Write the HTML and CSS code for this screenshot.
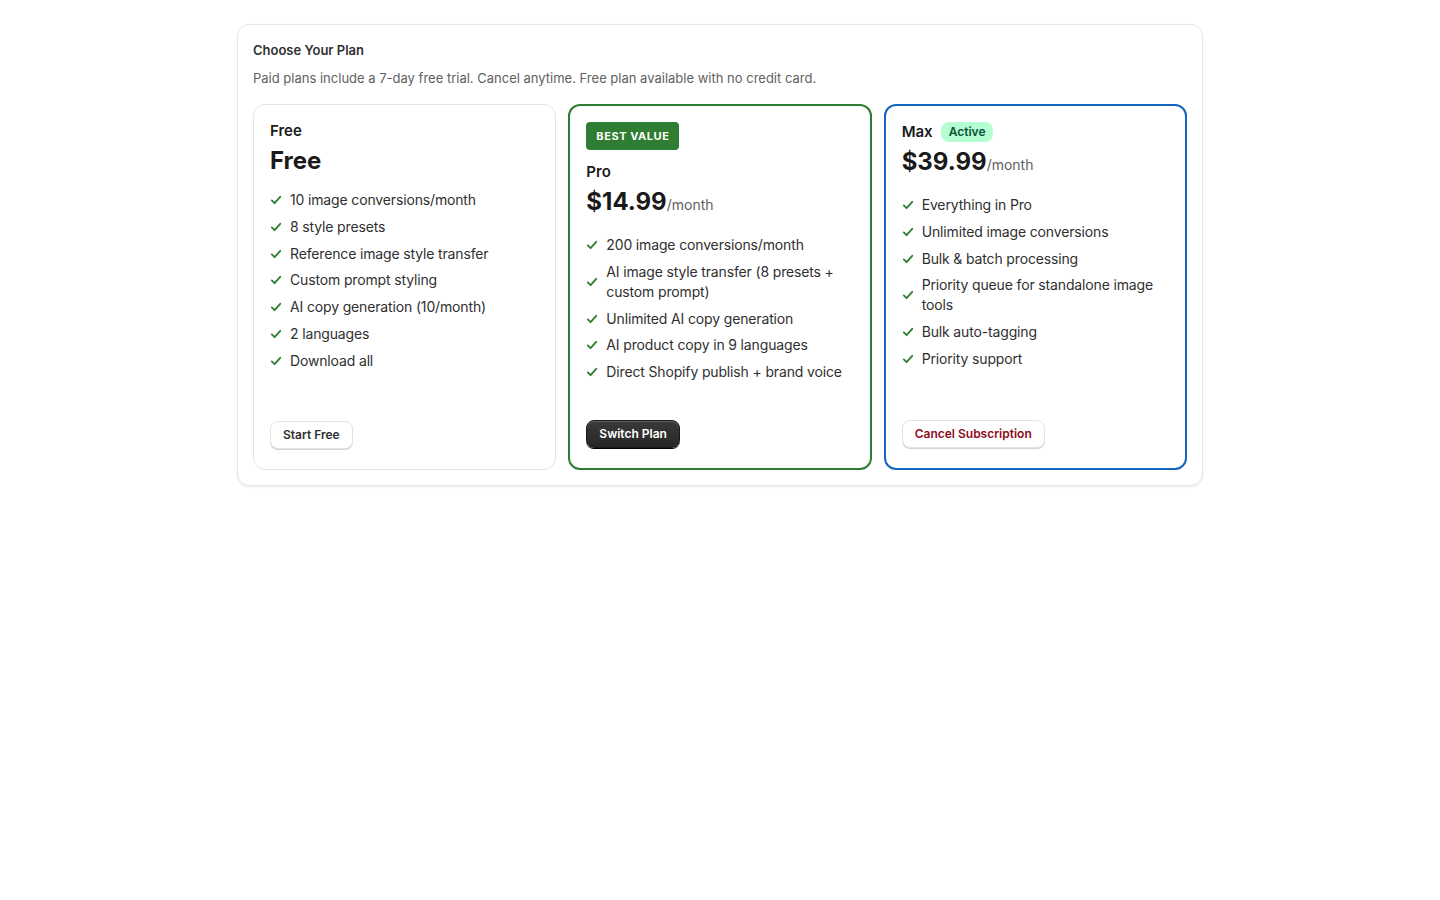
FILE: index.html
```html
<!DOCTYPE html>
<html lang="en">
<head>
<meta charset="utf-8">
<title>Choose Your Plan</title>
<link rel="stylesheet" href="styles.css">
</head>
<body>
<div class="page">
  <section class="panel">
    <h2 class="panel-title">Choose Your Plan</h2>
    <p class="panel-sub">Paid plans include a 7-day free trial. Cancel anytime. Free plan available with no credit card.</p>
    <div class="plans">
      <div class="plan plan-free">
        <div class="plan-name">Free</div>
        <div class="price">Free</div>
        <ul class="features">
          <li><svg class="check" viewBox="0 0 12 12"><path d="M1.8 6.4 4.6 9.2 10.2 2.8"/></svg><span>10 image conversions/month</span></li>
          <li><svg class="check" viewBox="0 0 12 12"><path d="M1.8 6.4 4.6 9.2 10.2 2.8"/></svg><span>8 style presets</span></li>
          <li><svg class="check" viewBox="0 0 12 12"><path d="M1.8 6.4 4.6 9.2 10.2 2.8"/></svg><span>Reference image style transfer</span></li>
          <li><svg class="check" viewBox="0 0 12 12"><path d="M1.8 6.4 4.6 9.2 10.2 2.8"/></svg><span>Custom prompt styling</span></li>
          <li><svg class="check" viewBox="0 0 12 12"><path d="M1.8 6.4 4.6 9.2 10.2 2.8"/></svg><span>AI copy generation (10/month)</span></li>
          <li><svg class="check" viewBox="0 0 12 12"><path d="M1.8 6.4 4.6 9.2 10.2 2.8"/></svg><span>2 languages</span></li>
          <li><svg class="check" viewBox="0 0 12 12"><path d="M1.8 6.4 4.6 9.2 10.2 2.8"/></svg><span>Download all</span></li>
        </ul>
        <div class="actions"><button class="btn btn-secondary">Start Free</button></div>
      </div>
      <div class="plan plan-pro">
        <div class="tag-best">BEST VALUE</div>
        <div class="plan-name">Pro</div>
        <div class="price">$14.99<span class="per">/month</span></div>
        <ul class="features">
          <li><svg class="check" viewBox="0 0 12 12"><path d="M1.8 6.4 4.6 9.2 10.2 2.8"/></svg><span>200 image conversions/month</span></li>
          <li><svg class="check" viewBox="0 0 12 12"><path d="M1.8 6.4 4.6 9.2 10.2 2.8"/></svg><span>AI image style transfer (8 presets + custom prompt)</span></li>
          <li><svg class="check" viewBox="0 0 12 12"><path d="M1.8 6.4 4.6 9.2 10.2 2.8"/></svg><span>Unlimited AI copy generation</span></li>
          <li><svg class="check" viewBox="0 0 12 12"><path d="M1.8 6.4 4.6 9.2 10.2 2.8"/></svg><span>AI product copy in 9 languages</span></li>
          <li><svg class="check" viewBox="0 0 12 12"><path d="M1.8 6.4 4.6 9.2 10.2 2.8"/></svg><span>Direct Shopify publish + brand voice</span></li>
        </ul>
        <div class="actions"><button class="btn btn-primary">Switch Plan</button></div>
      </div>
      <div class="plan plan-max">
        <div class="name-row"><span class="plan-name">Max</span><span class="badge-active">Active</span></div>
        <div class="price">$39.99<span class="per">/month</span></div>
        <ul class="features">
          <li><svg class="check" viewBox="0 0 12 12"><path d="M1.8 6.4 4.6 9.2 10.2 2.8"/></svg><span>Everything in Pro</span></li>
          <li><svg class="check" viewBox="0 0 12 12"><path d="M1.8 6.4 4.6 9.2 10.2 2.8"/></svg><span>Unlimited image conversions</span></li>
          <li><svg class="check" viewBox="0 0 12 12"><path d="M1.8 6.4 4.6 9.2 10.2 2.8"/></svg><span>Bulk &amp; batch processing</span></li>
          <li><svg class="check" viewBox="0 0 12 12"><path d="M1.8 6.4 4.6 9.2 10.2 2.8"/></svg><span>Priority queue for standalone image tools</span></li>
          <li><svg class="check" viewBox="0 0 12 12"><path d="M1.8 6.4 4.6 9.2 10.2 2.8"/></svg><span>Bulk auto-tagging</span></li>
          <li><svg class="check" viewBox="0 0 12 12"><path d="M1.8 6.4 4.6 9.2 10.2 2.8"/></svg><span>Priority support</span></li>
        </ul>
        <div class="actions"><button class="btn btn-secondary btn-critical">Cancel Subscription</button></div>
      </div>
    </div>
  </section>
</div>
</body>
</html>
```
FILE: styles.css
```css
* { box-sizing: border-box; }
html, body { margin: 0; padding: 0; background: #ffffff; }
body {
  font-family: Inter, "Noto Sans", "Liberation Sans", sans-serif;
  color: #303030;
  -webkit-font-smoothing: antialiased;
}
.page { padding: 24px 16px; }
.panel {
  max-width: 966px;
  margin: 0 auto;
  background: #fff;
  border: 1px solid #e6e6e6;
  border-radius: 12px;
  box-shadow: 0 1px 2px rgba(0,0,0,0.08);
  padding: 15px 15px 15px;
}
.panel-title {
  margin: 0;
  font-size: 13px;
  line-height: 20px;
  font-weight: 600;
  color: #303030;
}
.panel-sub {
  margin: 8px 0 0;
  font-size: 13px;
  line-height: 20px;
  color: #616161;
}
.plans {
  margin-top: 16px;
  display: grid;
  grid-template-columns: repeat(3, 1fr);
  gap: 12px;
}
.plan {
  display: flex;
  flex-direction: column;
  border: 1px solid #e3e3e3;
  border-radius: 12px;
  padding: 16px 16px 20px;
  min-height: 366px;
}
.plan-pro { border: 2px solid #2e7d32; padding: 16px 16px 20px; }
.plan-max { border: 2px solid #1565c0; padding: 16px 16px 20px; }
.plan-name {
  font-size: 15px;
  line-height: 20px;
  font-weight: 600;
  color: #1a1a1a;
}
.name-row { display: flex; align-items: center; gap: 8px; }
.badge-active {
  background: #b4fed2;
  color: #0c5132;
  font-size: 12px;
  font-weight: 600;
  line-height: 20px;
  padding: 0 8px;
  border-radius: 8px;
}
.tag-best {
  align-self: flex-start;
  background: #2e7d32;
  color: #fff;
  font-size: 11px;
  font-weight: 700;
  letter-spacing: 0.55px;
  line-height: 28px;
  padding: 0 10px;
  border-radius: 4px;
  margin: 0 0 12px;
}
.price {
  display: flex;
  align-items: baseline;
  margin-top: 4px;
  font-size: 24px;
  line-height: 32px;
  font-weight: 700;
  color: #1a1a1a;
}
.per {
  font-size: 14px;
  line-height: 20px;
  font-weight: 400;
  color: #616161;
}
.features {
  list-style: none;
  margin: 17px 0 0;
  padding: 0;
  display: flex;
  flex-direction: column;
  gap: 6.8px;
}
.plan-free .features { margin-top: 13px; }
.features li {
  display: flex;
  align-items: center;
  gap: 8px;
  font-size: 14px;
  letter-spacing: -0.15px;
  line-height: 20px;
  font-weight: 400;
  color: #303030;
}
.check {
  flex: none;
  width: 12px;
  height: 12px;
  fill: none;
  stroke: #2e7d32;
  stroke-width: 1.8;
  stroke-linecap: round;
  stroke-linejoin: round;
}
.actions { margin-top: auto; padding-top: 24px; }
.btn {
  font-family: inherit;
  font-size: 12px;
  font-weight: 600;
  line-height: 20px;
  height: 28px;
  padding: 0 12px;
  border-radius: 8px;
  cursor: pointer;
}
.btn-secondary {
  background: #fff;
  color: #303030;
  border: 1px solid #e3e3e3;
  box-shadow: 0 1px 0 #d4d4d4;
}
.btn-critical { color: #8e0b21; }
.btn-primary {
  background: linear-gradient(#3a3a3a, #262626);
  color: #fff;
  border: 1px solid #1a1a1a;
  box-shadow: inset 0 1px 0 rgba(255,255,255,0.2), 0 1px 0 #000;
}
```
